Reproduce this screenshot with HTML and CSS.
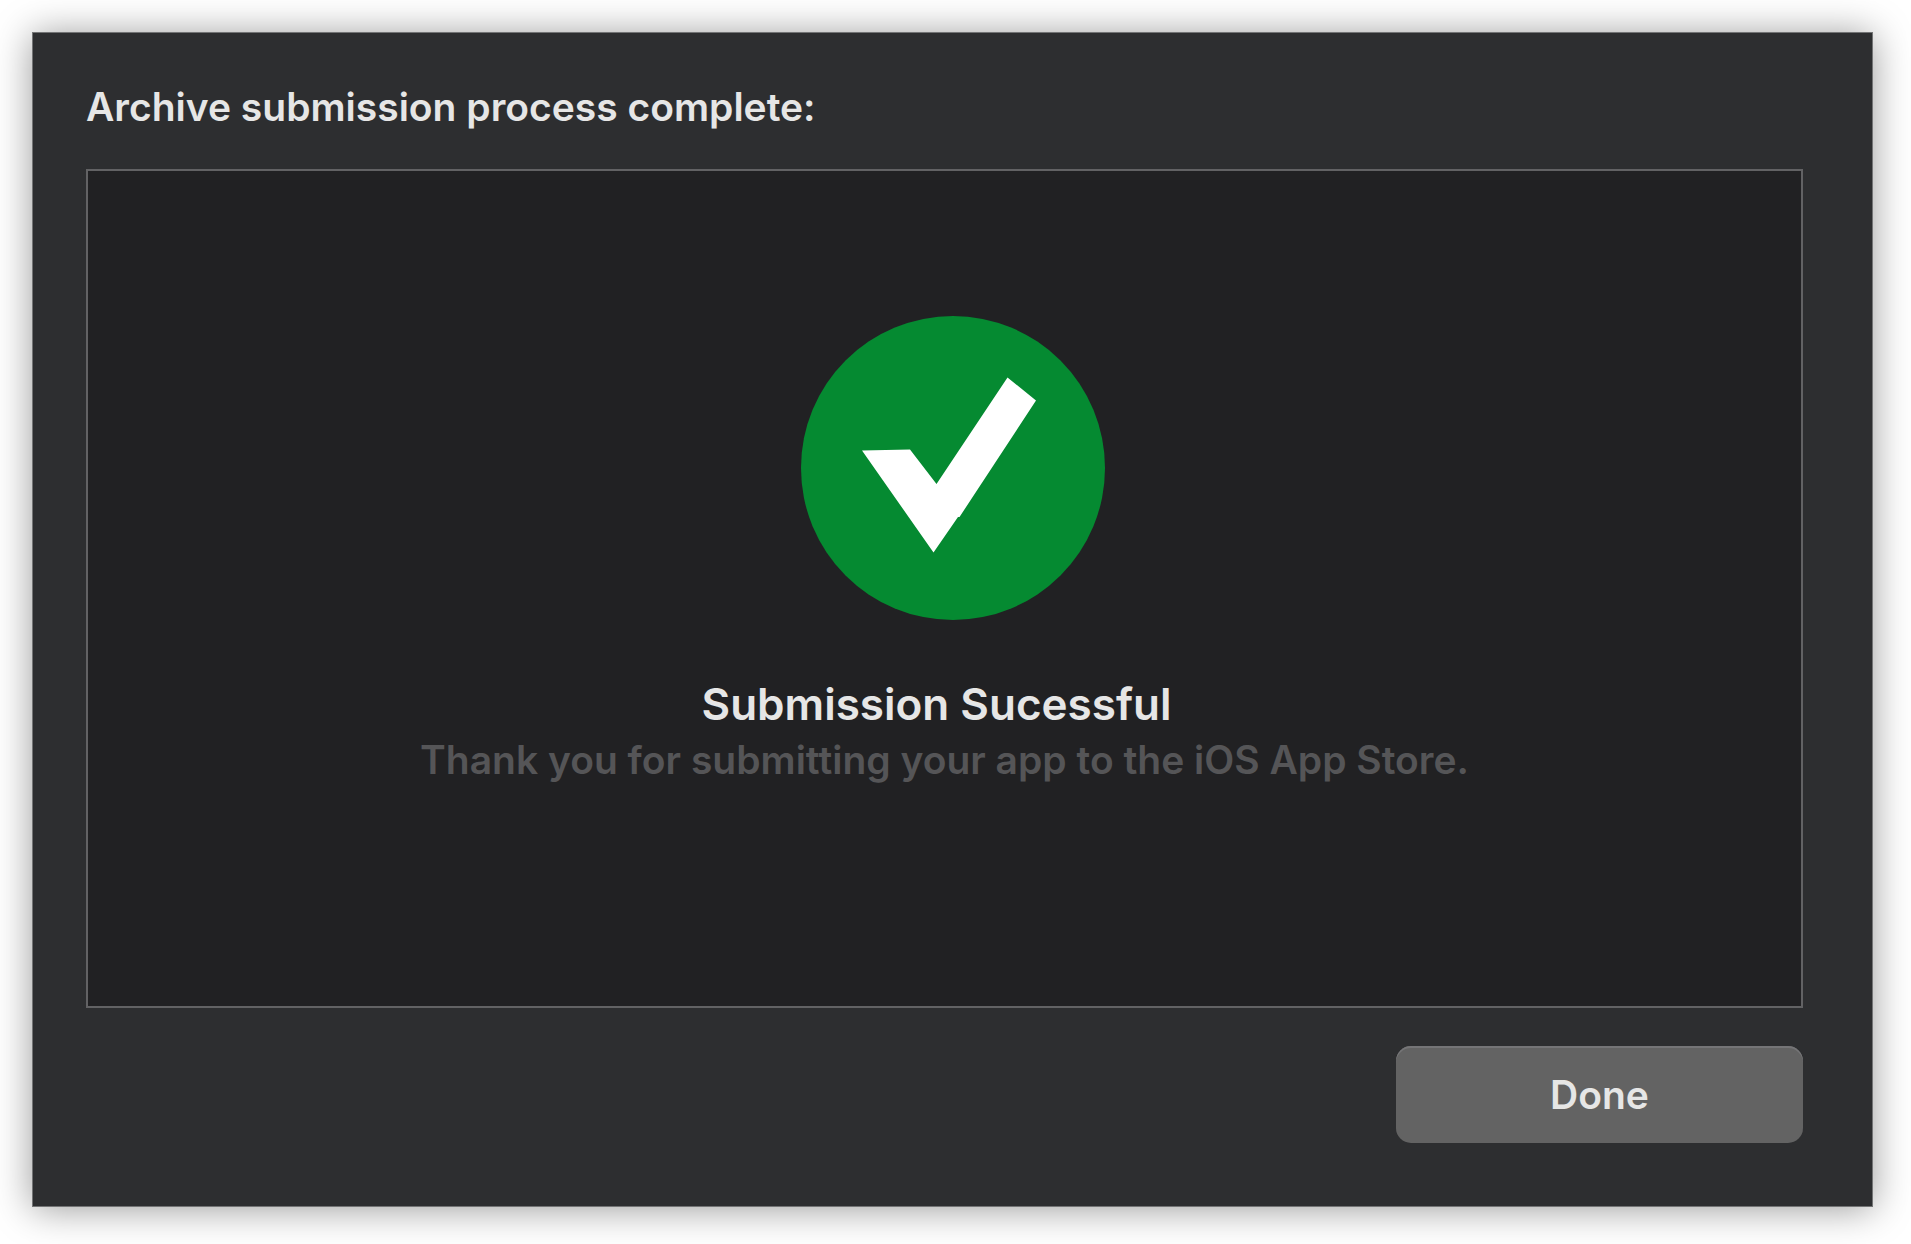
FILE: index.html
```html
<!DOCTYPE html>
<html lang="en">
<head>
<meta charset="utf-8">
<meta name="viewport" content="width=device-width, initial-scale=1">
<title>Archive submission</title>
<link rel="stylesheet" href="styles.css">
</head>
<body>
<main class="dialog" role="dialog" aria-labelledby="dialog-title">
  <h1 class="dialog-title" id="dialog-title">Archive submission process complete:</h1>
  <section class="result">
    <svg class="result-icon" viewBox="0 0 304 304" aria-hidden="true">
      <circle cx="152" cy="152" r="152" fill="#058a31"/>
      <path fill="#fff" d="M61 134.5L109 133.5L135.5 168L206.5 61.5L235 84.5L158.500 201L157 201L132.500 236.500Z"/>
    </svg>
    <h2 class="result-title">Submission Sucessful</h2>
    <p class="result-text">Thank you for submitting your app to the iOS App Store.</p>
  </section>
  <footer class="actions">
    <button class="button" type="button">Done</button>
  </footer>
</main>
</body>
</html>
```
FILE: styles.css
```css
* {
  box-sizing: border-box;
}

body {
  margin: 0;
  min-height: 100vh;
  padding: 32px 38px 37px 32px;
  display: flex;
  background: #fff;
  color: #e6e6e6;
  font-family: Inter, "Liberation Sans", sans-serif;
  font-size: 39px;
  font-weight: 600;
  line-height: 48px;
}

.dialog {
  flex: 1;
  display: flex;
  flex-direction: column;
  gap: 38px;
  padding: 50px 69px 63px 53px;
  background: #2d2e30;
  border: 1px solid #737475;
  box-shadow: 0 2px 36px rgba(0, 0, 0, 0.4);
}

.dialog-title,
.result-title,
.result-text {
  margin: 0;
  font-size: inherit;
  font-weight: inherit;
}

.result {
  flex: 1;
  display: flex;
  flex-direction: column;
  align-items: center;
  padding: 145px 16px 48px;
  background: #212123;
  border: 2px solid #626264;
  text-align: center;
}

.result-icon {
  width: 304px;
  height: 304px;
  margin: 0 0 56px 16px;
}

.result-title {
  padding-right: 16px;
  margin-bottom: 4px;
  font-size: 44px;
  line-height: 56px;
}

.result-text {
  color: #555557;
}

.actions {
  display: flex;
  justify-content: flex-end;
}

.button {
  width: 407px;
  height: 97px;
  padding: 0;
  border: 0;
  border-radius: 15px;
  background: #636363;
  box-shadow: inset 0 2px #757577;
  color: inherit;
  font: inherit;
}
```
